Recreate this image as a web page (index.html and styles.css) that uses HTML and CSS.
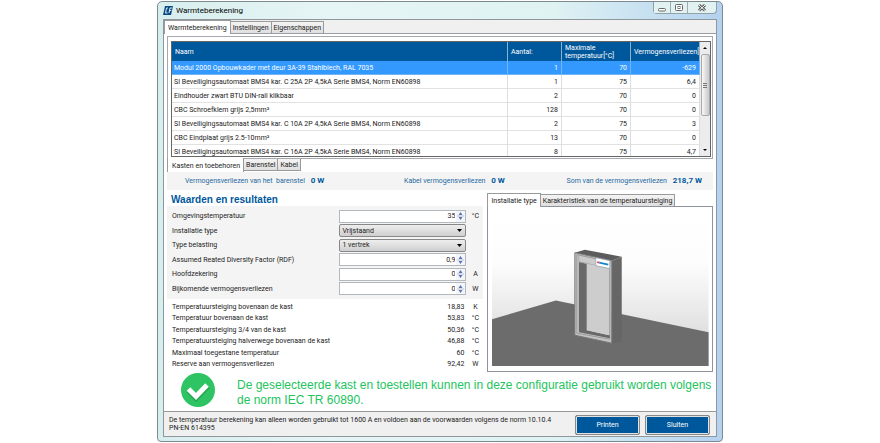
FILE: index.html
```html
<!DOCTYPE html>
<html lang="nl">
<head>
<meta charset="utf-8">
<title>Warmteberekening</title>
<link rel="stylesheet" href="styles.css">
</head>
<body>
<div class="window">
  <header class="titlebar">
    <svg class="app-icon" viewBox="0 0 10 9"><path d="M2 0h8L8 9H0z" fill="#0b4a80"/><path d="M5 2H3.500L2.500 7h2M6 7l1-5h2M6.500 4.500h1.800" stroke="#d8ecfa" fill="none"/></svg>
    <h1>Warmteberekening</h1>
    <div class="caption">
      <button aria-label="Minimaliseren"><svg viewBox="0 0 10 10"><rect x="1.500" y="5.500" width="7" height="2.500" rx="1" fill="#fff" stroke="#666"/></svg></button>
      <button aria-label="Maximaliseren"><svg viewBox="0 0 10 10"><rect x="1.500" y="1.500" width="7" height="6" rx="1" fill="#fff" stroke="#666"/><rect x="4" y="3.500" width="2" height="2" fill="none" stroke="#777"/></svg></button>
      <button class="close" aria-label="Venster sluiten"><svg viewBox="0 0 10 10"><path d="M2 2l6 5.500M8 2L2 7.500" stroke="#555" stroke-width="3"/><path d="M2 2l6 5.500M8 2L2 7.500" stroke="#fff"/></svg></button>
    </div>
  </header>
  <div class="client">
    <nav class="tabs main-tabs">
      <button class="tab active">Warmteberekening</button><button class="tab">Instellingen</button><button class="tab">Eigenschappen</button>
    </nav>
    <main class="page">
      <section class="list-frame">
        <div class="list">
          <div class="list-view">
            <table>
              <colgroup><col><col class="c-count"><col class="c-temp"><col class="c-loss"></colgroup>
              <thead><tr><th>Naam</th><th>Aantal:</th><th>Maximale<br>temperatuur[°C]</th><th>Vermogensverliezen[W]</th></tr></thead>
              <tbody>
                <tr class="selected"><td>Modul 2000 Opbouwkader met deur 3A-39 Stahlblech, RAL 7035</td><td>1</td><td>70</td><td>-629</td></tr>
                <tr><td>SI Beveiligingsautomaat BMS4 kar. C 25A 2P 4,5kA Serie BMS4, Norm EN60898</td><td>1</td><td>75</td><td>6,4</td></tr>
                <tr><td>Eindhouder zwart BTU DIN-rail klikbaar</td><td>2</td><td>70</td><td>0</td></tr>
                <tr><td>CBC Schroefklem grijs 2,5mm²</td><td>128</td><td>70</td><td>0</td></tr>
                <tr><td>SI Beveiligingsautomaat BMS4 kar. C 10A 2P 4,5kA Serie BMS4, Norm EN60898</td><td>2</td><td>75</td><td>3</td></tr>
                <tr><td>CBC Eindplaat grijs 2.5-10mm²</td><td>13</td><td>70</td><td>0</td></tr>
                <tr><td>SI Beveiligingsautomaat BMS4 kar. C 16A 2P 4,5kA Serie BMS4, Norm EN60898</td><td>8</td><td>75</td><td>4,7</td></tr>
              </tbody>
            </table>
          </div>
          <div class="scrollbar">
            <svg class="arrow" viewBox="0 0 4 2"><path d="M0 2l2-2 2 2z"/></svg>
            <div class="thumb"><i></i><i></i><i></i></div>
            <svg class="arrow" viewBox="0 0 4 2"><path d="M0 0l2 2 2-2z"/></svg>
          </div>
        </div>
      </section>
      <nav class="tabs sub-tabs">
        <button class="tab active">Kasten en toebehoren</button><button class="tab">Barenstel</button><button class="tab">Kabel</button>
      </nav>
      <section class="totals">
        <p>Vermogensverliezen van het&nbsp; barenstel <b>0 W</b></p>
        <p>Kabel vermogensverliezen <b>0 W</b></p>
        <p>Som van de vermogensverliezen <b>218,7 W</b></p>
      </section>
      <div class="columns">
        <section class="values">
          <h2>Waarden en resultaten</h2>
          <form class="form">
            <label for="temp">Omgevingstemperatuur</label>
            <span class="spin"><input id="temp" value="35"><button type="button" aria-label="Temperatuur wijzigen"><svg viewBox="0 0 7 10"><path d="M1.500 4l2-3 2 3zM1.500 6l2 3 2-3z" fill="#5c73b5"/><path d="M0 5h7" stroke="#b9c2da"/></svg></button></span><span>°C</span>
            <label for="inst">Installatie type</label>
            <span class="drop"><select id="inst"><option>Vrijstaand</option></select><svg viewBox="0 0 5 3"><path d="M0 0h5L2.500 3z"/></svg></span><span></span>
            <label for="load">Type belasting</label>
            <span class="drop"><select id="load"><option>1 vertrek</option></select><svg viewBox="0 0 5 3"><path d="M0 0h5L2.500 3z"/></svg></span><span></span>
            <label for="rdf">Assumed Reated Diversity Factor (RDF)</label>
            <span class="spin"><input id="rdf" value="0,9"><button type="button" aria-label="RDF wijzigen"><svg viewBox="0 0 7 10"><path d="M1.500 4l2-3 2 3zM1.500 6l2 3 2-3z" fill="#5c73b5"/><path d="M0 5h7" stroke="#b9c2da"/></svg></button></span><span></span>
            <label for="fuse">Hoofdzekering</label>
            <span class="spin"><input id="fuse" value="0"><button type="button" aria-label="Hoofdzekering wijzigen"><svg viewBox="0 0 7 10"><path d="M1.500 4l2-3 2 3zM1.500 6l2 3 2-3z" fill="#5c73b5"/><path d="M0 5h7" stroke="#b9c2da"/></svg></button></span><span>A</span>
            <label for="extra">Bijkomende vermogensverliezen</label>
            <span class="spin"><input id="extra" value="0"><button type="button" aria-label="Verliezen wijzigen"><svg viewBox="0 0 7 10"><path d="M1.500 4l2-3 2 3zM1.500 6l2 3 2-3z" fill="#5c73b5"/><path d="M0 5h7" stroke="#b9c2da"/></svg></button></span><span>W</span>
          </form>
          <div class="results">
            <span>Temperatuursteiging bovenaan de kast</span><span>18,83</span><span>K</span>
            <span>Temperatuur bovenaan de kast</span><span>53,83</span><span>°C</span>
            <span>Temperatuursteiging 3/4 van de kast</span><span>50,36</span><span>°C</span>
            <span>Temperatuursteiging halverwege bovenaan de kast</span><span>46,88</span><span>°C</span>
            <span>Maximaal toegestane temperatuur</span><span>60</span><span>°C</span>
            <span>Reserve aan vermogensverliezen</span><span>92,42</span><span>W</span>
          </div>
        </section>
        <section class="preview">
          <nav class="tabs">
            <button class="tab active">Installatie type</button><button class="tab">Karakteristiek van de temperatuursteiging</button>
          </nav>
          <div class="preview-box">
            <svg viewBox="0 0 217 159" preserveAspectRatio="none">
              <defs><linearGradient id="sky" x1="0" y1="0" x2="0" y2="1"><stop offset="0" stop-color="#fff"/><stop offset=".35" stop-color="#fdfdfd"/><stop offset=".85" stop-color="#dcdcdc"/></linearGradient></defs>
              <rect width="217" height="159" fill="url(#sky)"/>
              <path d="M0 112L64 93L217 125V159H0z" fill="#6c6c6c"/>
              <path d="M83 45l10-3 37 7-10 4z" fill="#5c5c5c"/>
              <path d="M120 53l10-4v85l-10 2z" fill="#666"/>
              <path d="M83 45l37 8v83l-37-8z" fill="#c3c3c3" stroke="#777"/>
              <path d="M85 47l33 7v78l-33-6z" fill="#cacaca" stroke="#989898"/>
              <path d="M87 54l8 2v67l23 5v3l-31-6z" fill="#696969"/>
              <path d="M87 47v7l31 7" stroke="#aaa" fill="none"/>
              <path d="M95 56l22 5v67l-22-5z" fill="#cdcdcd"/>
              <path d="M104 50l14 3v8l-14-3z" fill="#fff" stroke="#8f9fad" stroke-width=".7"/>
              <path d="M107.500 55l9 2" stroke="#1685cf" stroke-width="2"/><path d="M105.500 54.500l2 .5" stroke="#e33a4a" stroke-width="2"/>
            </svg>
          </div>
        </section>
      </div>
      <section class="verdict">
        <svg viewBox="0 0 34 34"><circle cx="17" cy="17" r="17" fill="#2fc463"/><path d="M7.500 18L15 25.500 27 13.500" fill="none" stroke="#25a552" stroke-width="5"/><path d="M7.500 16L15 23.500 26 12" fill="none" stroke="#fff" stroke-width="5"/></svg>
        <p>De geselecteerde kast en toestellen kunnen in deze configuratie gebruikt worden volgens de norm IEC TR 60890.</p>
      </section>
    </main>
    <footer class="footer">
      <p>De temperatuur berekening kan alleen worden gebruikt tot 1600 A en voldoen aan de voorwaarden volgens de norm 10.10.4<br>PN-EN 614395</p>
      <button>Printen</button><button>Sluiten</button>
    </footer>
  </div>
</div>
</body>
</html>
```
FILE: styles.css
```css
* { box-sizing: border-box; }
body { margin: 0; padding: 1px 157px; background: #fff; font: 7px/10px Roboto, "Liberation Sans", Arial, sans-serif; color: #222; }
button, input, select { font: inherit; color: inherit; margin: 0; padding: 0; }
h1, h2, p { margin: 0; }
svg { display: block; }
.window { border: 1px solid #7c8a90; border-radius: 5px 5px 4px 4px; padding: 0 5px 4px; background: linear-gradient(90deg, #d8eeee, #e6f5f5 30%, #dff3f3 70%, #b4d2f0); }
.titlebar { display: flex; align-items: center; gap: 3px; height: 17px; }
.titlebar h1 { flex: 1; font-size: 8px; font-weight: normal; color: #000; }
.app-icon { width: 10px; height: 9px; }
.caption { display: flex; align-self: flex-start; height: 12px; border: 1px solid #93a2a7; border-top: 0; border-radius: 0 0 4px 4px; }
.caption button { display: grid; place-items: center; width: 17px; border: 0; border-right: 1px solid #9eacb0; background: #e2f1f1; }
.caption .close { width: 28px; border-right: 0; border-radius: 0 0 4px 0; }
.caption svg { width: 10px; height: 10px; }
.client { border: 1px solid #8e979c; background: #f0f0f0; }
.tabs { display: flex; align-items: flex-end; height: 13px; }
.tab { height: 12px; padding: 0 2px; border: 1px solid #9a9a9a; border-bottom: 0; background: linear-gradient(#f4f4f4, #dfdfdf); white-space: nowrap; }
.tab + .tab { margin-left: -1px; }
.tab.active { position: relative; height: 14px; margin-bottom: -1px; padding: 0 3px; background: #fff; }
.page { border-top: 1px solid #9a9ea4; padding: 2px 3px 3px; background: #fff; }
.list-frame { padding: 4px 1px 1px 3px; border: 1px solid #a6a9b0; }
.list { display: flex; height: 116px; border: 1px solid #666; overflow: hidden; }
.list-view { flex: 1; min-width: 0; overflow: hidden; }
table { width: 100%; table-layout: fixed; border-collapse: separate; border-spacing: 0; }
.c-count { width: 54px; }
.c-temp, .c-loss { width: 69px; }
th { height: 19px; padding: 0 0 0 3px; background: #00589c; color: #fff; font-weight: normal; line-height: 8px; text-align: left; white-space: nowrap; overflow: hidden; border-right: 1px solid #8cb0ce; }
td { height: 14px; padding: 0 3px 0 2px; line-height: 10px; text-align: right; white-space: nowrap; border-right: 1px solid #ddd; border-bottom: 1px solid #e2e2e2; }
td:first-child { text-align: left; }
.selected td { background: #3399ff; color: #fff; border-color: #70b5f8; }
.scrollbar { display: flex; flex-direction: column; align-items: center; width: 10px; background: #ececec; }
.scrollbar .arrow { width: 4px; height: 2px; margin: 5px 0; }
.thumb { display: flex; flex-direction: column; justify-content: center; align-items: center; gap: 1px; width: 9px; height: 62px; margin-bottom: auto; border: 1px solid #aaa; border-radius: 2px; background: linear-gradient(90deg, #f8f8f8, #c8c8c8); }
.thumb i { width: 4px; height: 1px; background: #777; }
.sub-tabs { align-items: flex-start; }
.sub-tabs .tab { border-top: 0; border-bottom: 1px solid #9a9a9a; }
.sub-tabs .active { margin-top: -1px; border-bottom: 0; padding: 2px 3px 0 4px; }
.totals { display: flex; justify-content: space-between; padding: 4px 11px 4px 18px; background: #f4f4f4; color: #24699f; }
.totals p:nth-child(2) { margin-left: 18px; }
.totals b { margin-left: 4px; font-size: 8px; color: #00589c; }
.columns { display: flex; gap: 4px; padding-top: 3px; }
.values { flex: 317; min-width: 0; }
.preview { flex: 226; min-width: 0; }
.values h2 { padding: 0 4px; font: bold 10px/13px "Liberation Sans", Arial, sans-serif; color: #00589c; }
.form, .results { display: grid; grid-template-columns: 1fr 127px 8px; column-gap: 5px; align-items: center; padding: 3px 4px 3px 5px; }
.form { height: 93px; background: #f4f4f4; grid-auto-rows: 1fr; }
.form > span:nth-child(3n), .results span:nth-child(3n) { text-align: center; }
.results { height: 74px; grid-template-columns: 1fr 40px 8px; column-gap: 7px; grid-auto-rows: 1fr; padding-top: 2px; }
.results span:nth-child(3n + 2) { text-align: right; }
.spin { display: flex; height: 13px; border: 1px solid #b3b8bf; background: #fff; }
.spin input { flex: 1; min-width: 0; border: 0; background: none; text-align: right; padding-right: 1px; }
.spin button { width: 9px; border: 0; background: #f4f5f8; }
.spin svg { width: 7px; height: 10px; margin: auto; }
.drop { display: grid; align-items: center; height: 13px; border: 1px solid #888; border-radius: 2px; background: linear-gradient(#eee, #cfcfcf); }
.drop select, .drop svg { grid-area: 1 / 1; }
.drop select { appearance: none; border: 0; padding: 0 2px; background: none; }
.drop svg { width: 5px; height: 3px; margin-right: 3px; justify-self: end; }
.preview-box { height: 166px; padding: 1px 3px 5px 4px; border: 1px solid #8f93a0; }
.preview-box svg { width: 100%; height: 100%; }
.verdict { display: flex; gap: 22px; padding: 0 0 0 14px; color: #22c45e; font: 12px/15px "Liberation Sans", Arial, sans-serif; }
.verdict svg { flex: none; width: 34px; height: 34px; }
.verdict p { padding-top: 5px; }
.footer { display: flex; gap: 5px; padding: 3px 6px 1px 5px; border-top: 1px solid #999; line-height: 8px; }
.footer p { flex: 1; padding-top: 1px; }
.footer button { width: 65px; height: 20px; border: 1px solid #888; outline: 1px solid #e2e2e2; outline-offset: -2px; border-radius: 2px; background: #00589c; color: #fff; }
```
